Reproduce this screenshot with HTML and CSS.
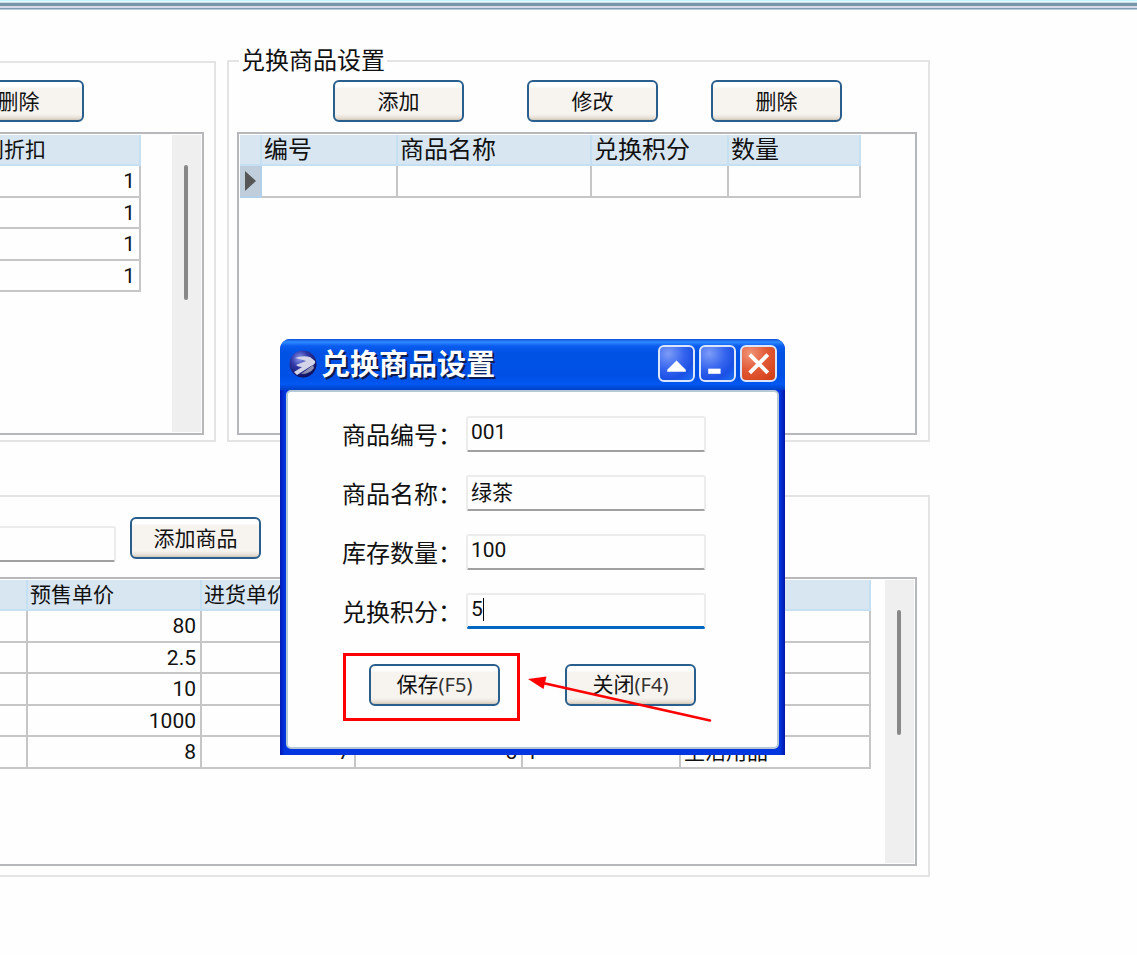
FILE: index.html
```html
<!DOCTYPE html>
<html lang="zh-CN">
<head>
<meta charset="utf-8">
<title>兑换商品设置</title>
<link rel="stylesheet" href="styles.css">
</head>
<body>
<div class="top-strip"></div>
<main class="workspace">
  <div class="group-row">
    <section class="group group-discount">
      <div class="discount-tools"><button class="btn" type="button">删除</button></div>
      <div class="frame frame-open frame-upper">
        <table class="grid">
          <colgroup><col class="w-20"><col class="w-181"></colgroup>
          <thead><tr><th></th><th>级别折扣</th></tr></thead>
          <tbody>
            <tr><td></td><td class="num">1</td></tr>
            <tr><td></td><td class="num">1</td></tr>
            <tr><td></td><td class="num">1</td></tr>
            <tr><td></td><td class="num">1</td></tr>
          </tbody>
        </table>
        <div class="scroll-track"><div class="scroll-thumb thumb-tall"></div></div>
      </div>
    </section>
    <fieldset class="group group-exchange">
      <legend>兑换商品设置</legend>
      <div class="exchange-tools">
        <button class="btn" type="button">添加</button>
        <button class="btn" type="button">修改</button>
        <button class="btn" type="button">删除</button>
      </div>
      <div class="frame frame-upper">
        <table class="grid grid-wide">
          <colgroup><col class="w-22"><col class="w-136"><col class="w-194"><col class="w-137"><col class="w-132"></colgroup>
          <thead><tr><th></th><th>编号</th><th>商品名称</th><th>兑换积分</th><th>数量</th></tr></thead>
          <tbody><tr><td class="row-head"><span class="row-marker"></span></td><td></td><td></td><td></td><td></td></tr></tbody>
        </table>
      </div>
    </fieldset>
  </div>

  <section class="group group-goods">
    <div class="goods-tools">
      <input class="field goods-search" type="text" aria-label="商品">
      <button class="btn" type="button">添加商品</button>
    </div>
    <div class="frame frame-open frame-lower">
      <table class="grid">
        <colgroup><col class="w-88"><col class="w-174"><col class="w-154"><col class="w-167"><col class="w-158"><col class="w-190"></colgroup>
        <thead><tr><th></th><th>预售单价</th><th>进货单价</th><th></th><th></th><th></th></tr></thead>
        <tbody>
          <tr><td></td><td class="num">80</td><td></td><td></td><td></td><td></td></tr>
          <tr><td></td><td class="num">2.5</td><td></td><td></td><td></td><td></td></tr>
          <tr><td></td><td class="num">10</td><td></td><td></td><td></td><td></td></tr>
          <tr><td></td><td class="num">1000</td><td></td><td></td><td></td><td></td></tr>
          <tr><td></td><td class="num">8</td><td class="num">7</td><td class="num">5</td><td>1</td><td>生活用品</td></tr>
        </tbody>
      </table>
      <div class="scroll-track"><div class="scroll-thumb"></div></div>
    </div>
  </section>
</main>

<div class="window" role="dialog" aria-labelledby="window-title">
  <header class="titlebar">
    <svg class="app-icon" viewBox="0 0 28 28" aria-hidden="true">
      <defs><radialGradient id="ball" cx="38%" cy="30%" r="70%"><stop offset="0" stop-color="#8f9cf0"/><stop offset=".45" stop-color="#3038a8"/><stop offset="1" stop-color="#10105c"/></radialGradient></defs>
      <circle cx="14" cy="14" r="13.5" fill="url(#ball)"/>
      <path d="M6 8Q14 5 21 7L26 11Q27 14 22 16L8 25L5 22L13 17Q9 17 7 15L17 11Q11 9 6 8Z" fill="#d4d4e8"/>
      <path d="M12 24L24 15L25 18Q21 24 12 24Z" fill="#8d8fae"/>
    </svg>
    <h1 id="window-title">兑换商品设置</h1>
    <div class="controls">
      <button class="ctl" type="button" aria-label="收起"><svg viewBox="0 0 32 32"><path d="M16 13L25 22V24H7V22Z" fill="#fff"/></svg></button>
      <button class="ctl" type="button" aria-label="最小化"><svg viewBox="0 0 32 32"><path d="M7 21H19V26H7Z" fill="#fff"/></svg></button>
      <button class="ctl ctl-close" type="button" aria-label="关闭"><svg viewBox="0 0 32 32"><path d="M7.500 7.500L25 25M25 7.500L7.500 25" stroke="#fff" stroke-width="3.800"/></svg></button>
    </div>
  </header>
  <form class="window-body">
    <div class="form-grid">
      <label for="code">商品编号：</label>
      <input class="field" id="code" type="text" value="001">
      <label for="name">商品名称：</label>
      <input class="field" id="name" type="text" value="绿茶">
      <label for="stock">库存数量：</label>
      <input class="field" id="stock" type="text" value="100">
      <label for="points">兑换积分：</label>
      <div class="active-field"><input class="field field-active" id="points" type="text" value="5"></div>
    </div>
    <div class="actions">
      <button class="btn" type="button">保存<span class="key">(F5)</span></button>
      <button class="btn" type="button">关闭<span class="key">(F4)</span></button>
    </div>
  </form>
  <svg class="callout" viewBox="0 0 370 70" aria-hidden="true">
    <rect x="1.500" y="1.500" width="174" height="65" fill="none" stroke="#f00" stroke-width="3"/>
    <path d="M200 30L367 67.500" stroke="#f00" stroke-width="2.600" stroke-linecap="round"/>
    <path d="M185 26L203.500 23.500L200.500 36Z" fill="#f00"/>
  </svg>
</div>
</body>
</html>
```

FILE: styles.css
```css
* { box-sizing: border-box; }

body {
  margin: 0;
  background: #fefefe;
  color: #111;
  font-family: "Noto Sans CJK SC", sans-serif;
  font-size: 21px;
  line-height: 24px;
  overflow: hidden;
}

button, input { font: inherit; color: inherit; margin: 0; }

.top-strip {
  height: 10px;
  background: linear-gradient(#c4f6ff 0 1px, #e6fbff 1px 2px, #c9dbe4 2px 3px, #7895a9 3px 6px, #d4dae8 6px 8px, #7f9fb6 8px 9px, #b8cad8 9px);
}

/* The left part of the workspace is scrolled out of view */
.workspace { margin-left: -60px; padding: 37px 207px 0 0; }

.group-row { display: flex; gap: 11px; }

.group { border: 2px solid #e4e4e5; min-width: 0; }

.group-discount {
  width: 276px;
  margin-top: 14px;
  padding: 17px 10px 5px 0;
  border-left: 0;
}

.discount-tools { padding-left: 13px; }

.group-exchange { flex: 1; margin: 0; padding: 5px 11px 5px 8px; }

.group-exchange legend {
  margin-left: 2px;
  padding: 0 2px 4px;
  font-size: 24px;
}

.exchange-tools {
  display: grid;
  grid-template-columns: 194px 184px auto;
  padding-left: 96px;
}

.group-goods { margin-top: 53px; padding: 20px 11px 9px 0; border-left: 0; }

.goods-tools { display: flex; gap: 14px; align-items: flex-start; }

.btn {
  width: 131px;
  height: 42px;
  padding: 0 0 3px;
  border: 2px solid #2a5e8c;
  border-radius: 6px;
  background: linear-gradient(#fff 0 5px, #f7f3ef 6px 32px, #e6dfd5 36px, #cfc6b8);
  white-space: nowrap;
}

.key { font-family: "Noto Sans", sans-serif; font-size: 20px; color: #333; }

.frame {
  display: flex;
  align-items: flex-start;
  border: 2px solid #b7b8bc;
  padding: 1px;
}

.frame-open { border-left: 0; padding-left: 0; }
.frame-upper { height: 303px; margin-top: 10px; }
.frame-lower { height: 289px; margin-top: 15px; }

.grid { table-layout: fixed; width: 1px; border-spacing: 0; }

.grid th, .grid td {
  height: 32px;
  padding: 0 4px 0 3px;
  border-right: 2px solid #c6c6c6;
  border-bottom: 2px solid #c6c6c6;
  line-height: 24px;
  text-align: left;
  white-space: nowrap;
}

.grid td { font-family: Roboto, "Noto Sans CJK SC", sans-serif; }

.grid th {
  height: 31px;
  padding: 0 2px 3px;
  background: #d8e6f1;
  border-color: #c5dff3;
  font-weight: normal;
}

.grid tr:nth-child(even) td { height: 31px; }
.grid .num { text-align: right; }
.grid-wide th { font-size: 24px; }

.grid .row-head { background: #c0cedb; border-color: #b4d0e8; padding: 0 0 0 5px; }

.row-marker {
  display: block;
  width: 0;
  height: 0;
  border: solid transparent;
  border-width: 10px 0 10px 11px;
  border-left-color: #565656;
}

.w-20 { width: 20px; }
.w-22 { width: 22px; }
.w-88 { width: 88px; }
.w-132 { width: 132px; }
.w-136 { width: 136px; }
.w-137 { width: 137px; }
.w-154 { width: 154px; }
.w-158 { width: 158px; }
.w-167 { width: 167px; }
.w-174 { width: 174px; }
.w-181 { width: 181px; }
.w-190 { width: 190px; }
.w-194 { width: 194px; }

.scroll-track {
  width: 29px;
  align-self: stretch;
  margin-left: auto;
  padding: 30px 13px 0 12px;
  background: #efefef;
}

.scroll-thumb { height: 125px; border-radius: 2px; background: #888; }
.thumb-tall { height: 135px; }

.field {
  width: 240px;
  height: 36px;
  padding: 0 3px 4px;
  border: 2px solid #ececec;
  border-bottom-color: #a0a0a0;
  border-radius: 3px;
  background: #fefefe;
  font-family: Roboto, "Noto Sans CJK SC", sans-serif;
  outline: 0;
}

.goods-search { width: 176px; margin-top: 9px; }

.window {
  position: absolute;
  left: 280px;
  top: 339px;
  width: 505px;
  padding: 0 6px 6px;
  border-radius: 10px 10px 0 0;
  background: linear-gradient(90deg, #0019b8, #0036e0 5px, #0036e0 500px, #0016a6);
}

.titlebar {
  display: flex;
  align-items: center;
  gap: 4px;
  height: 51px;
  margin: 0 -6px;
  padding: 0 8px 2px 9px;
  border-radius: 10px 10px 0 0;
  background: linear-gradient(#0a50d8, #2f8cff 3px, #0a5cf0 7px, #0052e4 14px, #0050e6 38px, #0058f2 45px, #0040c8);
}

.app-icon { width: 28px; height: 28px; }

.titlebar h1 {
  margin: 0;
  padding-bottom: 4px;
  color: #fff;
  font-size: 29px;
  font-weight: bold;
  line-height: 44px;
  text-shadow: 2px 2px 0 #0a1c50;
}

.controls { display: flex; gap: 4px; margin-left: auto; }

.ctl {
  width: 37px;
  height: 37px;
  padding: 0;
  border: 2px solid #dbe6fb;
  border-radius: 6px;
  background: radial-gradient(circle at 25% 20%, #7d9cf8, #3464ee 45%, #1c50e4 70%, #1a70fa);
}

.ctl svg { display: block; }
.ctl-close { background: radial-gradient(circle at 25% 20%, #f09478, #e25a36 45%, #d03c12); }

.window-body {
  padding: 24px 54px 41px;
  border: 2px solid #b5c8d6;
  border-radius: 5px;
  background: #fefefe;
}

.form-grid {
  display: grid;
  grid-template-columns: 124px 240px;
  row-gap: 23px;
  align-items: center;
}

.form-grid label { font-size: 24px; white-space: nowrap; }

.active-field { position: relative; height: 36px; }
.field-active { border-bottom: 3px solid #0067c0; }

.active-field::after {
  content: "";
  position: absolute;
  left: 17px;
  top: 5px;
  width: 1px;
  height: 23px;
  background: #000;
}

.actions {
  display: flex;
  gap: 65px;
  margin-top: 35px;
  padding-left: 27px;
}

.callout {
  position: absolute;
  left: 63px;
  top: 314px;
  width: 370px;
  height: 70px;
  pointer-events: none;
}
```
